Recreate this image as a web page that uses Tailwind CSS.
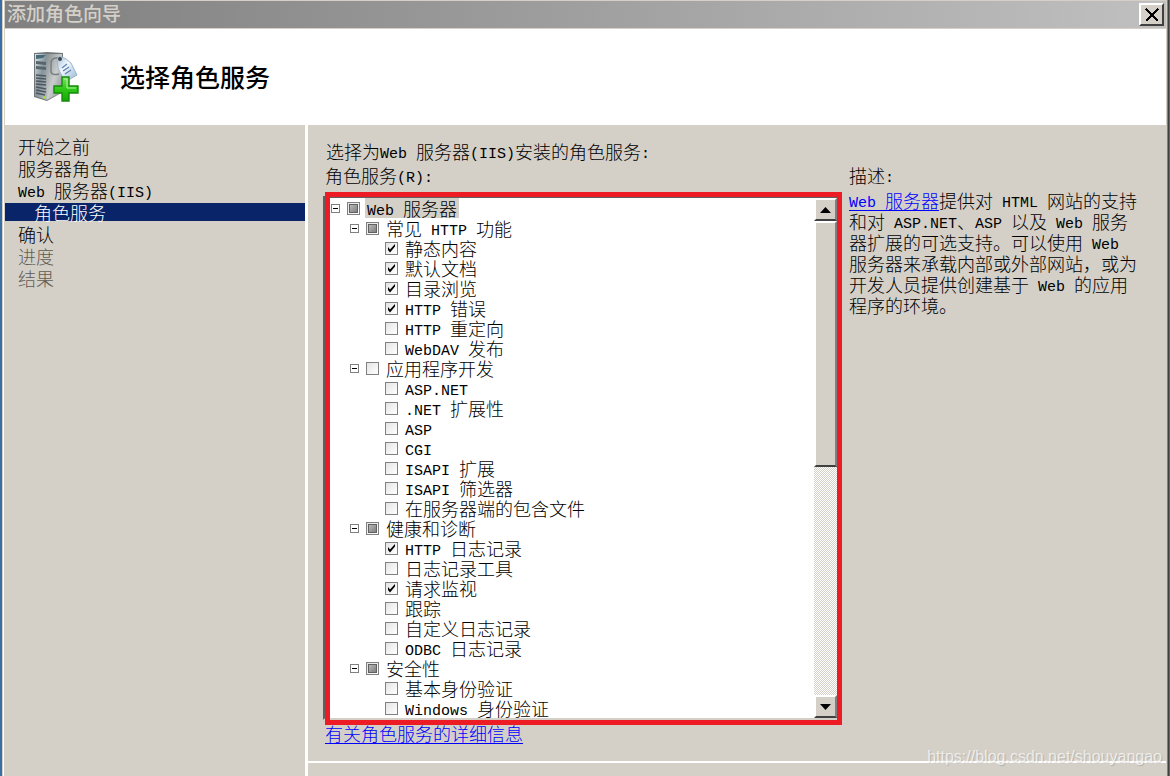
<!DOCTYPE html>
<html lang="zh-CN">
<head>
  <meta charset="UTF-8">
  <meta name="viewport" content="width=device-width, initial-scale=1.0">
  <title>添加角色向导</title>
  <script src="https://cdn.jsdelivr.net/npm/@tailwindcss/browser@4"></script>
</head>
<body class="bg-[#3a6ea5] pl-[2px] pr-px font-['Noto_Sans_CJK_SC',sans-serif] text-[18px] leading-[22px] font-light text-black">

  <div class="relative flex flex-col min-h-screen bg-[#d4d0c8] border-l border-l-[#d4d0c8] border-r border-r-[#404040]">
    <div class="flex flex-col flex-1 border-l border-l-white border-r border-r-[#808080] pl-px pr-px pt-px">

      <!-- Title bar -->
      <header class="flex items-center justify-between h-[27px] pl-[2px] pr-[2px] bg-linear-to-r from-[#808080] to-[#c0c0c0]">
        <h1 class="text-[19px] leading-6 pb-[3px] font-medium text-[#d4d0c8]">添加角色向导</h1>
        <button type="button" aria-label="关闭" class="flex items-center justify-center w-[25px] h-[23px] bg-[#d4d0c8] border-2 border-t-white border-l-white border-r-[#404040] border-b-[#404040]">
          <svg class="w-[14px] h-[14px]" viewBox="0 0 14 14" stroke="#000" stroke-width="2" shape-rendering="crispEdges"><path d="M1 1L13 13M13 1L1 13"/></svg>
        </button>
      </header>

      <!-- Page heading -->
      <div class="flex items-center h-24 mt-px pl-7 gap-[41px] bg-white">
        <svg class="w-[46px] h-[52px]" viewBox="0 0 46 52">
          <defs>
            <linearGradient id="front" x1="0" y1="0" x2="1" y2="1"><stop offset="0" stop-color="#d7e8ec"/><stop offset=".5" stop-color="#87939a"/><stop offset="1" stop-color="#b7bdc0"/></linearGradient>
            <linearGradient id="side" x1="0" y1="0" x2="1" y2="1"><stop offset="0" stop-color="#8a8f91"/><stop offset=".5" stop-color="#c9cdce"/><stop offset="1" stop-color="#85898b"/></linearGradient>
            <linearGradient id="tag" x1="0" y1="0" x2="1" y2="1"><stop offset="0" stop-color="#9dbad3"/><stop offset=".4" stop-color="#f2f8fd"/><stop offset="1" stop-color="#8eb2d3"/></linearGradient>
            <linearGradient id="plus" x1="0" y1="0" x2="0" y2="1"><stop offset="0" stop-color="#7be35c"/><stop offset=".5" stop-color="#2fc818"/><stop offset="1" stop-color="#12a806"/></linearGradient>
          </defs>
          <path d="M1 2L14 1L30 2L30 41L14 50L1 46Z" fill="#717779"/>
          <path d="M2 3L14 3L14 49L2 45Z" fill="url(#front)"/>
          <path d="M14 3L29 3L29 41L14 49Z" fill="url(#side)"/>
          <path d="M3 4H13L10 7L3 8Z" fill="#486a76"/>
          <path d="M3 10L13 11V14L3 13ZM3 15L13 16V19L3 18Z" fill="#59656c"/>
          <path d="M3 24L13 25M3 27L13 28M3 30L13 31M3 33L13 34M3 36L13 38M3 39L13 41M3 42L12 44" stroke="#4d585e" stroke-width="1.6"/>
          <path d="M10 45L13 46V48L10 47Z" fill="#9cf000"/>
          <path d="M27 8C23 6 18 7 18 12V20C18 24 22 24 26 23" fill="none" stroke="#777e81" stroke-width="1.4"/>
          <path d="M24 8L27 5L33 8L38 12L44 24L32 31L25 17Z" fill="url(#tag)" stroke="#9bb6cd" stroke-linejoin="round"/>
          <circle cx="27" cy="8" r="2" fill="#3f474b"/>
          <path d="M29 17L34 13M30 20L36 16M32 23L38 19" stroke="#6484b1" stroke-width="1.4"/>
          <path d="M29 26H36V35H45V42H36V50H29V42H21V35H29Z" fill="url(#plus)" stroke="#168c0b" stroke-width="1.4"/>
          <path d="M31 28H34V37H43" fill="none" stroke="#b5f59f"/>
        </svg>
        <h2 class="text-[25px] leading-8 pb-[2px] font-medium">选择角色服务</h2>
      </div>

      <div class="flex flex-1">
        <!-- Wizard steps -->
        <nav class="w-[300px] shrink-0 pt-[10px]">
          <ul>
            <li><a href="#" class="mixed block pl-[13px]">开始之前</a></li>
            <li><a href="#" class="mixed block pl-[13px]">服务器角色</a></li>
            <li><a href="#" class="mixed block pl-[13px]">Web 服务器(IIS)</a></li>
            <li class="py-[2px] bg-[#0a246a] bg-clip-content"><a href="#" aria-current="step" class="block pl-[29px] leading-[18px] text-white">角色服务</a></li>
            <li><a href="#" class="block pl-[13px]">确认</a></li>
            <li><span class="block pl-[13px] text-[#605c54]">进度</span></li>
            <li><span class="block pl-[13px] text-[#605c54]">结果</span></li>
          </ul>
        </nav>

        <main class="flex flex-col flex-1 border-l-3 border-white">
          <div class="flex-1 pl-[15px] pt-[15px]">
            <p class="mixed pl-[3px]">选择为Web 服务器(IIS)安装的角色服务:</p>
            <div class="grid grid-cols-[515fr_317fr] gap-x-[11px] mt-[2px]">
              <section>
                <h3 id="treeLabel" class="mixed pl-[2px]">角色服务(R):</h3>

                <div class="relative flex mt-[10px] border-2 border-r border-t-[#606060] border-l-[#606060] border-r-white border-b-[#d4d0c8] bg-white">
                  <ul id="tree" aria-labelledby="treeLabel" class="flex-1"></ul>

                  <!-- Scroll bar -->
                  <div class="flex flex-col w-[23px] bg-[conic-gradient(#d4d0c8_25%,#fff_0_50%,#d4d0c8_0_75%,#fff_0)] bg-size-[2px_2px]">
                    <button type="button" aria-label="向上" class="flex items-center justify-center h-[23px] bg-[#d4d0c8] border-2 border-t-white border-l-white border-r-[#808080] border-b-[#404040]">
                      <svg class="w-[11px] h-[6px]" viewBox="0 0 11 6"><path d="M0 6L5.500 0L11 6Z"/></svg>
                    </button>
                    <div class="h-[246px] bg-[#d4d0c8] border-2 border-t-white border-l-white border-r-[#808080] border-b-[#404040]"></div>
                    <button type="button" aria-label="向下" class="flex items-center justify-center h-[23px] mt-auto bg-[#d4d0c8] border-2 border-t-white border-l-white border-r-[#808080] border-b-[#404040]">
                      <svg class="w-[11px] h-[6px]" viewBox="0 0 11 6"><path d="M0 0L5.500 6L11 0Z"/></svg>
                    </button>
                  </div>

                  <!-- Red highlight frame -->
                  <div class="absolute -top-[6px] left-0 -right-[5px] -bottom-[7px] border-5 border-[#ed1c24] pointer-events-none"></div>
                </div>

                <a href="#" class="inline-block mt-[2px] ml-[2px] text-[#0000ff] underline underline-offset-2">有关角色服务的详细信息</a>
              </section>

              <section class="pr-[22px]">
                <h3 class="mixed">描述:</h3>
                <p class="mixed mt-[4px] leading-[21px]"><a href="#" class="text-[#0000ff] underline underline-offset-2">Web 服务器</a>提供对 HTML 网站的支持和对 ASP.NET、ASP 以及 Web 服务器扩展的可选支持。可以使用 Web 服务器来承载内部或外部网站，或为开发人员提供创建基于 Web 的应用程序的环境。</p>
              </section>
            </div>
          </div>
          <div class="h-[15px] border-t-2 border-white"></div>
        </main>
      </div>
    </div>

    <div class="absolute right-[6px] bottom-[8px] font-['Liberation_Sans',sans-serif] text-[16px] font-normal text-white/70 text-shadow-[1px_1px_1px_rgb(0_0_0/0.15)]">https://blog.csdn.net/shouyangao</div>
  </div>

  <script>
    // [level, state, name]
    const services = [
      [0, 'mixed', 'Web 服务器'],
      [1, 'mixed', '常见 HTTP 功能'],
      [2, 'on', '静态内容'],
      [2, 'on', '默认文档'],
      [2, 'on', '目录浏览'],
      [2, 'on', 'HTTP 错误'],
      [2, 'off', 'HTTP 重定向'],
      [2, 'off', 'WebDAV 发布'],
      [1, 'off', '应用程序开发'],
      [2, 'off', 'ASP.NET'],
      [2, 'off', '.NET 扩展性'],
      [2, 'off', 'ASP'],
      [2, 'off', 'CGI'],
      [2, 'off', 'ISAPI 扩展'],
      [2, 'off', 'ISAPI 筛选器'],
      [2, 'off', '在服务器端的包含文件'],
      [1, 'mixed', '健康和诊断'],
      [2, 'on', 'HTTP 日志记录'],
      [2, 'off', '日志记录工具'],
      [2, 'on', '请求监视'],
      [2, 'off', '跟踪'],
      [2, 'off', '自定义日志记录'],
      [2, 'off', 'ODBC 日志记录'],
      [1, 'mixed', '安全性'],
      [2, 'off', '基本身份验证'],
      [2, 'off', 'Windows 身份验证'],
    ];

    const indent = ['pl-[6px]', 'pl-[25px]', 'pl-[60px]'];
    const expander = `<button type="button" aria-label="折叠" class="flex items-center justify-center w-[9px] h-[9px] mr-[7px] border border-[#808080]"><span class="w-[5px] h-px bg-black"></span></button>`;
    const marks = {
      on: '<svg class="col-start-1 row-start-1 w-[13px] h-[13px] pointer-events-none" viewBox="0 0 13 13"><path d="M3 5V8L5 10.500L10 4.500V2L5 7.500Z"/></svg>',
      mixed: '<span class="col-start-1 row-start-1 w-[9px] h-[9px] border border-[#606060] bg-linear-to-br from-[#b8b8b8] to-[#808080] pointer-events-none"></span>',
      off: '',
    };

    document.getElementById('tree').innerHTML = services.map(([level, state, name], i) => `
      <li class="flex items-center h-5 ${indent[level]}">
        ${level < 2 ? expander : ''}
        <label class="flex items-center gap-[5px]">
          <span class="grid place-items-center">
            <input type="checkbox" class="col-start-1 row-start-1 appearance-none w-[13px] h-[13px] border border-[#808080] bg-linear-to-br from-[#e4e4e4] to-white" ${state === 'on' ? 'checked' : ''}>
            ${marks[state]}
          </span>
          <span class="mixed px-[2px] leading-5 whitespace-nowrap ${i === 0 ? 'bg-[#d4d0c8]' : ''}">${name}</span>
        </label>
      </li>`).join('');

    // Latin runs are set half as wide as a Chinese character
    function wrapLatin(node) {
      if (node.nodeType === Node.TEXT_NODE) {
        const holder = document.createElement('template');
        holder.innerHTML = node.textContent.replace(/[\x20-\x7e]+/g, `<span class="font-['Liberation_Mono',monospace] text-[15px] leading-[10px] align-[1px] font-normal">$&</span>`);
        node.replaceWith(holder.content);
      } else {
        [...node.childNodes].forEach(wrapLatin);
      }
    }
    document.querySelectorAll('.mixed').forEach(wrapLatin);
    document.querySelectorAll('#tree input').forEach((box, i) => {
      box.indeterminate = services[i][1] === 'mixed';
    });
  </script>
</body>
</html>
